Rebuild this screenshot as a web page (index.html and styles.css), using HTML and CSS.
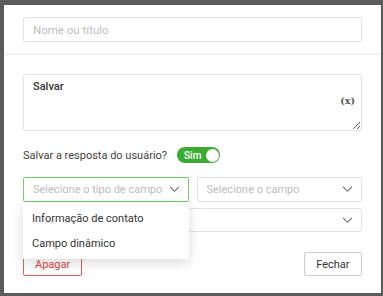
FILE: index.html
```html
<!DOCTYPE html>
<html lang="pt">
<head>
    <meta charset="UTF-8">
    <meta name="viewport" content="width=device-width, initial-scale=1.0">
    <title>Salvar</title>
    <link rel="stylesheet" href="styles.css">
</head>
<body>

    <div class="modal">
        <div class="modal-header">
            <input class="field" type="text" placeholder="Nome ou título">
        </div>

        <div class="modal-body">
            <div class="message">
                <textarea class="field message-text">Salvar</textarea>
                <span class="var-btn">(x)</span>
            </div>

            <div class="save-row">
                <span class="save-label">Salvar a resposta do usuário?</span>
                <div class="toggle">
                    <span class="toggle-text">Sim</span>
                    <span class="knob"></span>
                </div>
            </div>

            <div class="select-row">
                <div class="select-wrap">
                    <div class="select focused">
                        <span class="placeholder">Selecione o tipo de campo</span>
                        <svg class="chevron" viewBox="0 0 12 8" width="11" height="7"><path d="M1 1l5 5 5-5" fill="none" stroke="#666" stroke-width="1.2"/></svg>
                    </div>
                    <ul class="menu">
                        <li>Informação de contato</li>
                        <li>Campo dinâmico</li>
                    </ul>
                </div>
                <div class="select">
                    <span class="placeholder">Selecione o campo</span>
                    <svg class="chevron" viewBox="0 0 12 8" width="11" height="7"><path d="M1 1l5 5 5-5" fill="none" stroke="#666" stroke-width="1.2"/></svg>
                </div>
            </div>

            <div class="select full">
                <span class="placeholder"></span>
                <svg class="chevron" viewBox="0 0 12 8" width="11" height="7"><path d="M1 1l5 5 5-5" fill="none" stroke="#666" stroke-width="1.2"/></svg>
            </div>
        </div>

        <div class="modal-footer">
            <button class="btn btn-danger">Apagar</button>
            <button class="btn">Fechar</button>
        </div>
    </div>

</body>
</html>
```

FILE: styles.css
```css
body {
    font-family: 'Roboto', 'Liberation Sans', sans-serif;
    background-color: #5b5b5b;
    margin: 0;
    padding: 5px 2px 3px 4px;
    overflow: hidden;
}

.modal {
    background-color: #fff;
    height: 288px;
    box-sizing: border-box;
}

.modal-header {
    padding: 12px 19px;
    border-bottom: 1px solid #e8e8e8;
}

.field {
    display: block;
    width: 100%;
    box-sizing: border-box;
    height: 25px;
    border: 1px solid #e3e3e3;
    border-radius: 2px;
    padding: 0 9px;
    font-family: inherit;
    font-size: 11.5px;
    color: #333;
    outline: none;
}

.field::placeholder {
    color: #bdbdbd;
}

.modal-body {
    padding: 19px 19px 0;
}

.message {
    position: relative;
}

.message-text {
    height: 57px;
    padding: 5px 9px;
    font-size: 11px;
    font-weight: 500;
    color: #333;
    resize: vertical;
}

.var-btn {
    position: absolute;
    right: 7px;
    top: 21px;
    font-family: 'DejaVu Serif', serif;
    font-size: 9.5px;
    font-weight: bold;
    color: #555;
}

.save-row {
    display: flex;
    align-items: center;
    gap: 10px;
    margin-top: 16px;
}

.save-label {
    font-size: 11px;
    color: #444;
}

.toggle {
    display: flex;
    align-items: center;
    justify-content: space-between;
    width: 43px;
    height: 16px;
    border-radius: 8px;
    background-color: #3aac34;
    padding: 0 1.5px 0 7px;
    box-sizing: border-box;
}

.toggle-text {
    font-size: 10px;
    font-weight: 500;
    color: #fff;
}

.knob {
    width: 13px;
    height: 13px;
    border-radius: 50%;
    background-color: #fff;
}

.select-row {
    display: grid;
    grid-template-columns: 1fr 1fr;
    gap: 8px;
    margin-top: 14px;
}

.select-wrap {
    position: relative;
    min-width: 0;
}

.select {
    min-width: 0;
    display: flex;
    align-items: center;
    justify-content: space-between;
    height: 25px;
    box-sizing: border-box;
    border: 1px solid #e3e3e3;
    border-radius: 2px;
    padding: 0 8px 0 9px;
    font-size: 11px;
    white-space: nowrap;
}

.select.focused {
    border-color: #6ccf6a;
}

.select.full {
    margin-top: 6px;
    height: 24px;
}

.placeholder {
    color: #bdbdbd;
}

.menu {
    position: absolute;
    left: 0;
    right: 0;
    top: 26px;
    margin: 0;
    padding: 3px 0;
    list-style: none;
    background-color: #fff;
    box-shadow: 0 4px 12px rgba(0, 0, 0, 0.15);
    z-index: 10;
}

.menu li {
    height: 25px;
    line-height: 25px;
    padding: 0 9px;
    font-size: 11px;
    color: #333;
}

.modal-footer {
    display: flex;
    justify-content: space-between;
    padding: 20px 19px 0;
}

.btn {
    height: 24px;
    padding: 0 11.5px;
    background: #fff;
    border: 1px solid #ccc;
    border-radius: 2px;
    font-family: inherit;
    font-size: 11px;
    color: #333;
}

.btn-danger {
    border-color: #e35d5d;
    color: #e04444;
    padding: 0 11px;
}
```
